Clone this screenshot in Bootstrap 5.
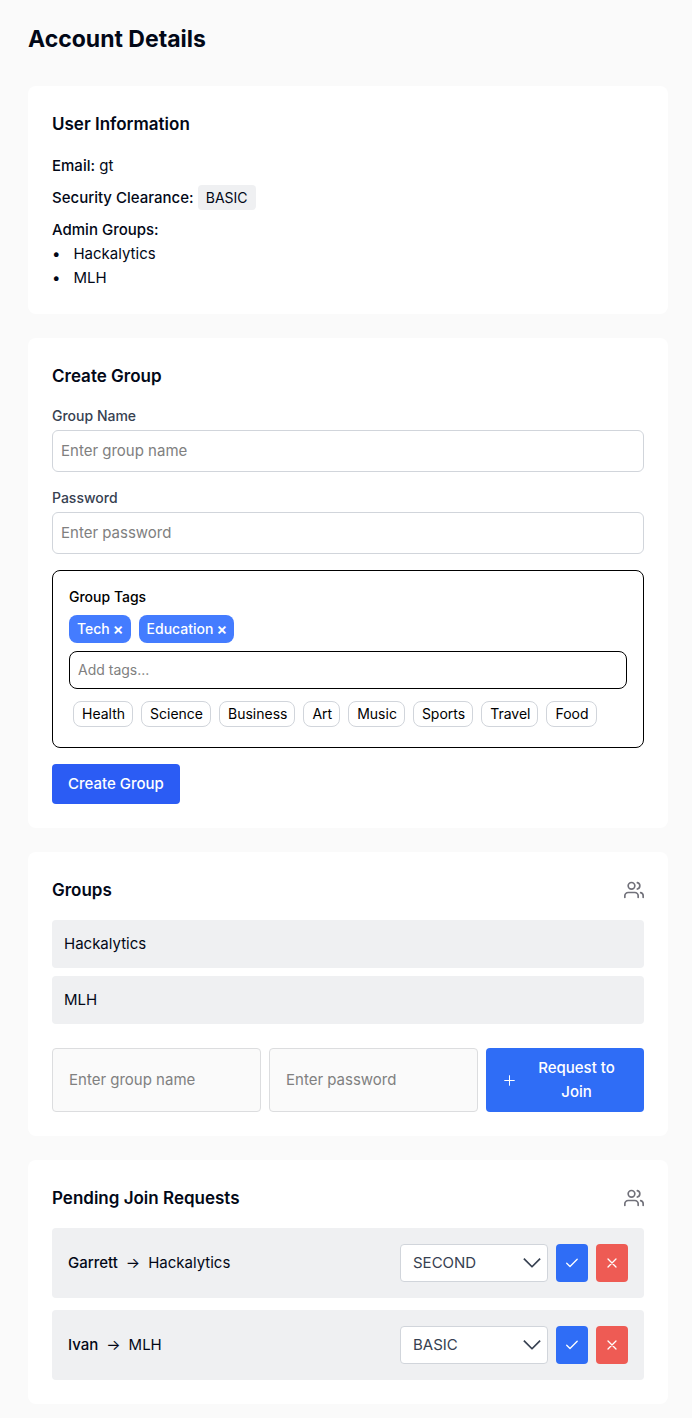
<!DOCTYPE html>
<html lang="en">
<head>
<meta charset="utf-8">
<meta name="viewport" content="width=device-width, initial-scale=1">
<title>Account Details</title>
<link href="https://cdn.jsdelivr.net/npm/bootstrap@5.3.0/dist/css/bootstrap.min.css" rel="stylesheet">
<style>
  body { background: #fafafa; color: #020817; font: 400 15px/24px Inter, "Liberation Sans", sans-serif; }
  .medium { font-weight: 500; }
  .page { padding: 23px 24px 14px 28px; }
  .page-title { font-size: 23px; line-height: 32px; font-weight: 700; margin-bottom: 31px; }
  .panel { background: #fff; border-radius: 8px; padding: 24px; }
  .panel-title { font-size: 17px; line-height: 28px; font-weight: 600; margin: 0; }
  .clearance { background: #eff0f2; border-radius: 4px; font-size: 14px; line-height: 20px; padding: 4px 8px; }
  .admin-list { list-style-position: inside; }
  .admin-list li::marker { content: "•"; }
  .admin-list span { margin-left: 13px; }
  .field-label { display: block; font-size: 14px; line-height: 20px; font-weight: 500; color: #374151; margin-bottom: 4px; }
  .form-control::placeholder { color: #808080; opacity: 1; }
  .form-control, .form-select { font-size: 15px; line-height: 24px; }
  .field { border-color: #d1d5db; border-radius: 6px; padding: 8px; }
  .tag-box { border: 1px solid #000; border-radius: 8px; padding: 16px; color: #000; font-size: 14px; line-height: 20px; }
  .tag-box label { display: block; margin-bottom: 8px; }
  .tag-on { border: 0; background: #447cff; color: #fff; border-radius: 8px; padding: 4px 7px 4px 8px; font-weight: 500; display: flex; gap: 3px; }
  .tag-on span { font-size: 16px; font-weight: 600; }
  .tag-input { border-color: #000; border-radius: 8px; padding: 8px; font-size: 14px; line-height: 20px; }
  .tag-list { padding: 4px; }
  .tag-off { border: 1px solid #d1d5db; background: #fff; color: #000; border-radius: 8px; padding: 2px 7px 2px 8px; }
  .btn-create { background: #2b5cf4; color: #fff; border: 0; border-radius: 4px; padding: 8px 16px; font-weight: 500; }
  .group-item { background: #eff0f2; border-radius: 4px; padding: 12px; }
  .join-field { background: #fafafa; border-color: #dcdddf; border-radius: 4px; padding: 8px 16px; min-width: 0; flex: 1 1 0; }
  .btn-main { background: #2f6df6; color: #fff; border: 0; border-radius: 4px; }
  .btn-join { flex: 0 0 158px; padding: 8px 16px; font-weight: 500; }
  .request-list { gap: 12px; }
  .request { background: #eff0f2; border-radius: 4px; padding: 16px; }
  .level { width: 148px; border-color: #d1d5db; border-radius: 4px; color: #374151; padding: 6px 32px 6px 12px;
    background-image: url("data:image/svg+xml,%3Csvg xmlns='http://www.w3.org/2000/svg' viewBox='0 0 16 16'%3E%3Cpath fill='none' stroke='%23374151' stroke-linejoin='round' stroke-width='1.4' d='m1.5 4.5 6.5 6.5 6.5-6.5'/%3E%3C/svg%3E");
    background-size: 20px 20px; background-position: right 5px center; }
  .btn-square { width: 32px; height: 38px; padding: 0; }
  .btn-reject { background: #ee5b54; color: #fff; border: 0; border-radius: 4px; }
  .users { color: #71717a; }
</style>
</head>
<body>
<svg class="d-none" aria-hidden="true">
  <symbol id="users" viewBox="0 0 24 24"><g fill="none" stroke="currentColor" stroke-width="2" stroke-linecap="round" stroke-linejoin="round"><path d="M17 21v-2a4 4 0 0 0-4-4H5a4 4 0 0 0-4 4v2"/><circle cx="9" cy="7" r="4"/><path d="M23 21v-2a4 4 0 0 0-3-3.87"/><path d="M16 3.13a4 4 0 0 1 0 7.75"/></g></symbol>
  <symbol id="check" viewBox="0 0 16 16"><path fill="none" stroke="currentColor" stroke-width="1.3" stroke-linecap="round" stroke-linejoin="round" d="M2.7 8.2 6 11.5 13.2 4.2"/></symbol>
  <symbol id="cross" viewBox="0 0 16 16"><path fill="none" stroke="currentColor" stroke-width="1.3" stroke-linecap="round" d="m4 4 8 8m0-8-8 8"/></symbol>
  <symbol id="plus" viewBox="0 0 15 15"><path fill="none" stroke="currentColor" stroke-linecap="round" d="M7.5 2.7v9.6M2.7 7.5h9.6"/></symbol>
</svg>
<main class="page">
  <h1 class="page-title">Account Details</h1>
  <div class="d-flex flex-column gap-4">

    <section class="panel">
      <h2 class="panel-title mb-3">User Information</h2>
      <p class="mb-2"><span class="medium">Email:</span> gt</p>
      <p class="mb-2"><span class="medium">Security Clearance:</span> <span class="clearance">BASIC</span></p>
      <p class="mb-0"><span class="medium">Admin Groups:</span></p>
      <ul class="admin-list ps-0 mb-0">
        <li><span>Hackalytics</span></li>
        <li><span>MLH</span></li>
      </ul>
    </section>

    <section class="panel">
      <h2 class="panel-title mb-3">Create Group</h2>
      <form>
        <div class="mb-3">
          <label class="field-label" for="name">Group Name</label>
          <input class="form-control field" id="name" type="text" placeholder="Enter group name">
        </div>
        <div class="mb-3">
          <label class="field-label" for="pass">Password</label>
          <input class="form-control field" id="pass" type="password" placeholder="Enter password">
        </div>
        <div class="tag-box mb-3">
          <label class="medium" for="tags">Group Tags</label>
          <div class="d-flex flex-wrap gap-2 mb-2">
            <button type="button" class="tag-on">Tech <span>×</span></button>
            <button type="button" class="tag-on">Education <span>×</span></button>
          </div>
          <input class="form-control tag-input mb-2" id="tags" type="text" placeholder="Add tags...">
          <div class="tag-list d-flex flex-wrap gap-2">
            <button type="button" class="tag-off">Health</button>
            <button type="button" class="tag-off">Science</button>
            <button type="button" class="tag-off">Business</button>
            <button type="button" class="tag-off">Art</button>
            <button type="button" class="tag-off">Music</button>
            <button type="button" class="tag-off">Sports</button>
            <button type="button" class="tag-off">Travel</button>
            <button type="button" class="tag-off">Food</button>
          </div>
        </div>
        <button type="submit" class="btn-create d-block">Create Group</button>
      </form>
    </section>

    <section class="panel">
      <div class="d-flex justify-content-between align-items-center mb-3">
        <h2 class="panel-title">Groups</h2>
        <svg class="users" width="20" height="20" aria-hidden="true"><use href="#users"/></svg>
      </div>
      <ul class="list-unstyled d-flex flex-column gap-2 mb-4">
        <li class="group-item">Hackalytics</li>
        <li class="group-item">MLH</li>
      </ul>
      <form class="d-flex gap-2">
        <input class="form-control join-field" type="text" placeholder="Enter group name" aria-label="Group name">
        <input class="form-control join-field" type="password" placeholder="Enter password" aria-label="Group password">
        <button type="submit" class="btn-main btn-join d-flex align-items-center gap-2">
          <svg class="flex-shrink-0" width="15" height="15" aria-hidden="true"><use href="#plus"/></svg>
          <span class="flex-grow-1">Request to Join</span>
        </button>
      </form>
    </section>

    <section class="panel">
      <div class="d-flex justify-content-between align-items-center mb-3">
        <h2 class="panel-title">Pending Join Requests</h2>
        <svg class="users" width="20" height="20" aria-hidden="true"><use href="#users"/></svg>
      </div>
      <ul class="list-unstyled d-grid mb-0 request-list">
        <li class="request d-flex align-items-center gap-2">
          <div class="me-auto"><span class="medium">Garrett</span><span class="mx-2">→</span>Hackalytics</div>
          <select class="form-select level" aria-label="Clearance for Garrett"><option>BASIC</option><option selected>SECOND</option></select>
          <button type="button" class="btn-main btn-square d-flex align-items-center justify-content-center" aria-label="Approve Garrett"><svg width="16" height="16"><use href="#check"/></svg></button>
          <button type="button" class="btn-reject btn-square d-flex align-items-center justify-content-center" aria-label="Reject Garrett"><svg width="16" height="16"><use href="#cross"/></svg></button>
        </li>
        <li class="request d-flex align-items-center gap-2">
          <div class="me-auto"><span class="medium">Ivan</span><span class="mx-2">→</span>MLH</div>
          <select class="form-select level" aria-label="Clearance for Ivan"><option selected>BASIC</option><option>SECOND</option></select>
          <button type="button" class="btn-main btn-square d-flex align-items-center justify-content-center" aria-label="Approve Ivan"><svg width="16" height="16"><use href="#check"/></svg></button>
          <button type="button" class="btn-reject btn-square d-flex align-items-center justify-content-center" aria-label="Reject Ivan"><svg width="16" height="16"><use href="#cross"/></svg></button>
        </li>
      </ul>
    </section>

  </div>
</main>
<script src="https://cdn.jsdelivr.net/npm/bootstrap@5.3.0/dist/js/bootstrap.bundle.min.js"></script>
</body>
</html>
